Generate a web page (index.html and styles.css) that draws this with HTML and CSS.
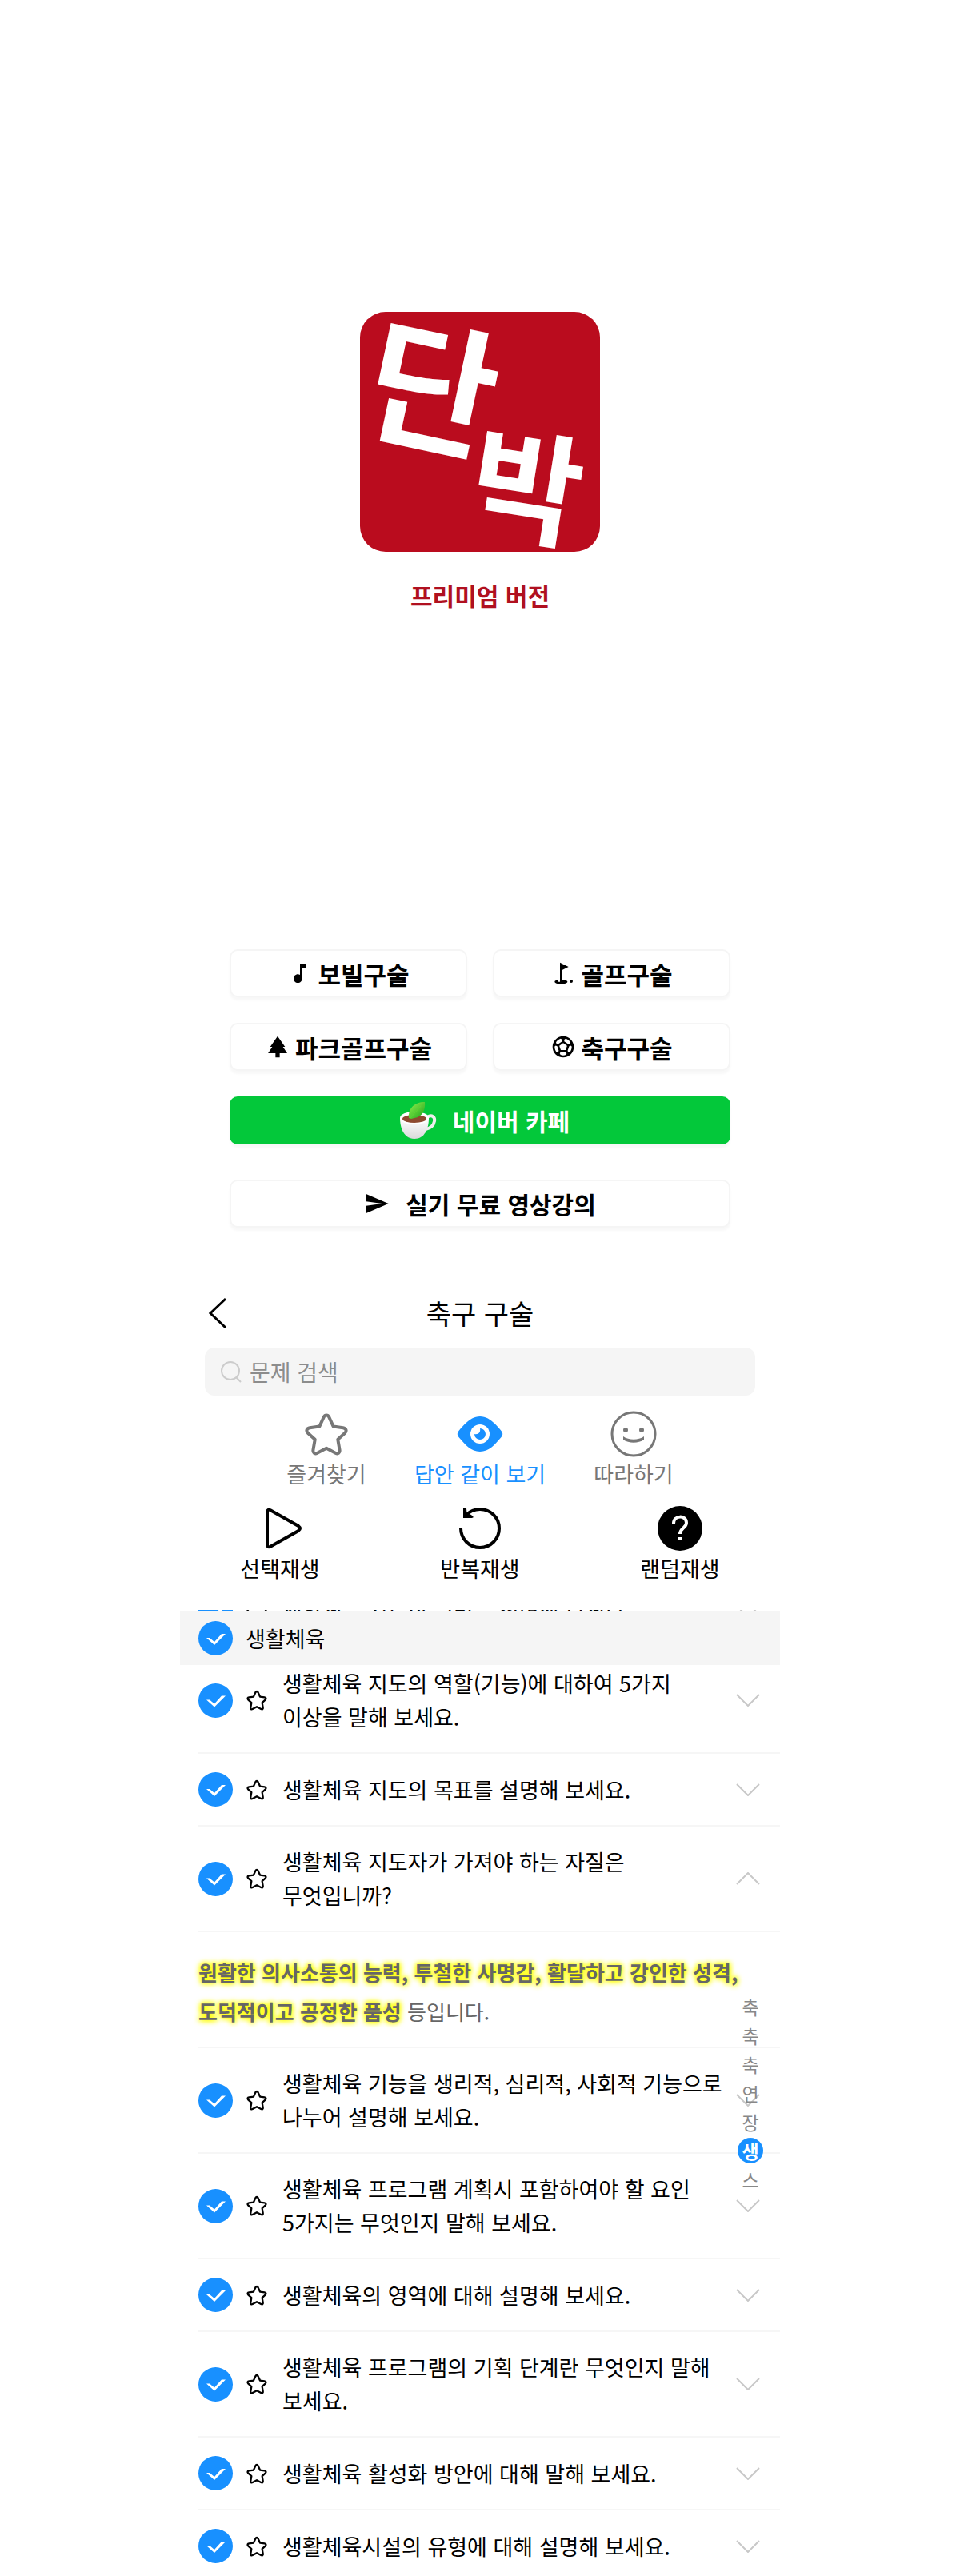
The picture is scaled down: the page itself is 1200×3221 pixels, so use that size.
FILE: index.html
```html
<!DOCTYPE html>
<html lang="ko">

<head>
  <meta charset="UTF-8">
  <meta name="viewport" content="width=device-width, initial-scale=1.0">
  <title>단박 - 축구 구술</title>
  <link rel="stylesheet" href="styles.css">
</head>

<body>
  <svg class="sprite" aria-hidden="true">
    <symbol id="icon-star" viewBox="0 0 60 60">
      <path d="M30 6.500C31.500 6.500 32.600 7.400 33.300 8.800L38.600 20.500L50.800 22.300C54.600 22.900 55.800 26 53.200 28.700L44.300 36.800L46.500 49.600C47.200 53.500 44.700 55.500 41.300 53.700L30 47.700L18.700 53.700C15.300 55.500 12.800 53.500 13.500 49.600L15.700 36.800L6.800 28.700C4.200 26 5.400 22.900 9.200 22.300L21.400 20.500L26.700 8.800C27.400 7.400 28.500 6.500 30 6.500Z" fill="none" stroke="currentColor" stroke-linejoin="round" />
    </symbol>
    <symbol id="icon-down" viewBox="0 0 30 16">
      <path d="M1 1L15 15L29 1" fill="none" stroke="currentColor" stroke-width="2" />
    </symbol>
    <symbol id="icon-up" viewBox="0 0 30 16">
      <path d="M1 15L15 1L29 15" fill="none" stroke="currentColor" stroke-width="2" />
    </symbol>
  </svg>

  <main class="app">
    <section class="hero">
      <svg class="logo" viewBox="0 0 300 300" role="img" aria-label="단박">
        <rect width="300" height="300" rx="32" fill="#ba0c1e" />
        <text class="logo-text logo-dan" x="90" y="161" transform="rotate(12 90 98)">단</text>
        <text class="logo-text logo-bak" x="208" y="276" transform="rotate(9 208 222)">박</text>
      </svg>
      <p class="version">프리미엄 버전</p>
    </section>

    <nav class="menu">
      <a class="menu-btn" href="#">
        <svg viewBox="0 0 24 24"><path d="M12 3v10.550c-.59-.34-1.270-.55-2-.55-2.210 0-4 1.790-4 4s1.790 4 4 4 4-1.790 4-4V7h4V3z" /></svg>
        보빌구술
      </a>
      <a class="menu-btn" href="#">
        <svg viewBox="0 0 24 24"><circle cx="19.500" cy="19.500" r="1.500" /><path d="M17 5.920 9 2v18H7v-1.730c-1.790.35-3 .99-3 1.730 0 1.100 2.690 2 6 2s6-.9 6-2c0-.99-2.160-1.810-5-1.970V8.980z" /></svg>
        골프구술
      </a>
      <a class="menu-btn" href="#">
        <svg viewBox="0 0 24 24"><path d="M17 12h2L12 2 5.050 12H7l-3.900 6h6.920v4h3.960v-4H21z" /></svg>
        파크골프구술
      </a>
      <a class="menu-btn" href="#list">
        <svg viewBox="0 0 24 24"><path d="M12 2C6.480 2 2 6.480 2 12s4.480 10 10 10 10-4.480 10-10S17.520 2 12 2zm1 3.300 1.350-.95c1.820.56 3.370 1.760 4.380 3.340l-.39 1.340-1.350.46L13 6.900zm-3.350-.95L11 5.300v1.600L7.010 9.490l-1.350-.46-.39-1.340c1.010-1.570 2.560-2.770 4.380-3.340M7.080 17.110l-1.140.1C4.730 15.810 4 13.990 4 12c0-.12.01-.23.02-.35l1-.73 1.380.48 1.460 4.340zm7.420 2.480c-.79.26-1.630.41-2.500.41s-1.710-.15-2.500-.41l-.69-1.490.64-1.100h5.110l.64 1.110zM14.270 15H9.730l-1.350-4.020L12 8.440l3.630 2.540zm3.790 2.210-1.140-.1-.79-1.370 1.460-4.340 1.390-.47 1 .73c.01.11.02.22.02.34 0 1.990-.73 3.810-1.940 5.210" /></svg>
        축구구술
      </a>
      <a class="menu-btn wide cafe" href="#">
        <svg class="cup" viewBox="0 0 58 48">
          <defs>
            <linearGradient id="cupFill" x1="0" y1="0" x2="0" y2="1">
              <stop offset="0" stop-color="#fff" />
              <stop offset="1" stop-color="#d9dadb" />
            </linearGradient>
            <linearGradient id="leafFill" x1="0" y1="0" x2="1" y2="1">
              <stop offset="0" stop-color="#8ff04e" />
              <stop offset="1" stop-color="#1fa51c" />
            </linearGradient>
          </defs>
          <path d="M46 20C52 16 56 20 55 25C54 31 49 34 44 35" fill="none" stroke="#eee" stroke-width="4" />
          <path d="M12 21C12 34 17 47 30 47C43 47 48 34 48 21Z" fill="url(#cupFill)" />
          <ellipse cx="30" cy="21" rx="18" ry="8" fill="#fff" />
          <ellipse cx="30" cy="22" rx="15" ry="5" fill="#8d4a2f" />
          <path d="M23 21C22 9 30 1 43 1C44 11 40 20 30 21L26 22Z" fill="url(#leafFill)" />
          <path d="M24 22L38 6" stroke="#5fd236" stroke-width="1" />
        </svg>
        네이버 카페
      </a>
      <a class="menu-btn wide lecture" href="#">
        <svg viewBox="0 0 24 24"><path d="M2.010 21 23 12 2.010 3 2 10l15 2-15 2z" /></svg>
        실기 무료 영상강의
      </a>
    </nav>

    <header class="topbar">
      <button class="back" type="button" aria-label="뒤로">
        <svg viewBox="0 0 24 40"><path d="M22 2L3 20L22 38" fill="none" stroke="currentColor" stroke-width="3" /></svg>
      </button>
      <h1>축구 구술</h1>
    </header>

    <form class="search" role="search">
      <svg viewBox="0 0 26 26" aria-hidden="true"><circle cx="12" cy="12" r="11" /><path d="M19 20L25 26" /></svg>
      <input type="search" placeholder="문제 검색" aria-label="문제 검색">
    </form>

    <div class="tabs">
      <button type="button">
        <svg class="thick"><use href="#icon-star" /></svg>
        즐겨찾기
      </button>
      <button type="button" class="on">
        <svg viewBox="0 0 60 60">
          <path d="M3.500 26C11 17 19 8 30 8S49 17 56.500 26Q60 30 56.500 34C49 43 41 52 30 52S11 43 3.500 34Q0 30 3.500 26Z" fill="currentColor" />
          <circle cx="30" cy="30" r="12" fill="#fff" />
          <path d="M30 23A7 7 0 1 1 23 30C28 31 31 28 30 23Z" fill="currentColor" />
        </svg>
        답안 같이 보기
      </button>
      <button type="button">
        <svg viewBox="0 0 60 60">
          <circle cx="30" cy="30" r="27" fill="none" stroke="currentColor" stroke-width="3" />
          <circle cx="20" cy="25" r="3" fill="currentColor" />
          <circle cx="40" cy="25" r="3" fill="currentColor" />
          <path d="M17 33C24 38 36 38 43 33V37C36 42 24 42 17 37Z" fill="currentColor" />
        </svg>
        따라하기
      </button>
    </div>

    <div class="tabs players">
      <button type="button">
        <svg viewBox="0 0 60 60"><path d="M14 10Q14 5 18.500 7.500L53 27Q57 30 53 33L18.500 52.500Q14 55 14 50Z" fill="none" stroke="currentColor" stroke-width="4" /></svg>
        선택재생
      </button>
      <button type="button">
        <svg viewBox="0 0 60 60">
          <path d="M6 30A24 24 0 1 0 30 6Q20 6 13 13" fill="none" stroke="currentColor" stroke-width="4" />
          <path d="M9 4L13 5L13.500 11L19 13L22 16L20 17L9 17Z" fill="currentColor" />
        </svg>
        반복재생
      </button>
      <button type="button">
        <svg viewBox="0 0 60 60">
          <circle cx="30" cy="30" r="28" fill="currentColor" />
          <path d="M22 24C22 13 38 13 38 23C38 30 30 29 30 37" fill="none" stroke="#fff" stroke-width="4" />
          <rect x="28" y="41" width="4" height="4" fill="#fff" />
        </svg>
        랜덤재생
      </button>
    </div>

    <section class="list" id="list">
      <div class="list-title">
        <input type="checkbox" id="all" checked>
        <label for="all">생활체육</label>
      </div>

      <ul>
        <li class="row">
          <input type="checkbox" id="q0" checked>
          <button class="star" type="button" aria-label="즐겨찾기"><svg><use href="#icon-star" /></svg></button>
          <label for="q0">생활체육 지도의 원리를 설명해 보세요.</label>
          <button class="arrow" type="button" aria-label="열기"><svg><use href="#icon-down" /></svg></button>
        </li>
        <li class="row">
          <input type="checkbox" id="q1" checked>
          <button class="star" type="button" aria-label="즐겨찾기"><svg><use href="#icon-star" /></svg></button>
          <label for="q1">생활체육 지도의 역할(기능)에 대하여 5가지 이상을 말해 보세요.</label>
          <button class="arrow" type="button" aria-label="열기"><svg><use href="#icon-down" /></svg></button>
        </li>
        <li class="row">
          <input type="checkbox" id="q2" checked>
          <button class="star" type="button" aria-label="즐겨찾기"><svg><use href="#icon-star" /></svg></button>
          <label for="q2">생활체육 지도의 목표를 설명해 보세요.</label>
          <button class="arrow" type="button" aria-label="열기"><svg><use href="#icon-down" /></svg></button>
        </li>
        <li class="row">
          <input type="checkbox" id="q3" checked>
          <button class="star" type="button" aria-label="즐겨찾기"><svg><use href="#icon-star" /></svg></button>
          <label for="q3">생활체육 지도자가 가져야 하는 자질은 무엇입니까?</label>
          <button class="arrow" type="button" aria-label="닫기"><svg><use href="#icon-up" /></svg></button>
        </li>
        <li class="answer">
          <strong>원활한 의사소통의 능력, 투철한 사명감, 활달하고 강인한 성격, 도덕적이고 공정한 품성</strong> 등입니다.
        </li>
        <li class="row">
          <input type="checkbox" id="q4" checked>
          <button class="star" type="button" aria-label="즐겨찾기"><svg><use href="#icon-star" /></svg></button>
          <label for="q4">생활체육 기능을 생리적, 심리적, 사회적 기능으로 나누어 설명해 보세요.</label>
          <button class="arrow" type="button" aria-label="열기"><svg><use href="#icon-down" /></svg></button>
        </li>
        <li class="row">
          <input type="checkbox" id="q5" checked>
          <button class="star" type="button" aria-label="즐겨찾기"><svg><use href="#icon-star" /></svg></button>
          <label for="q5">생활체육 프로그램 계획시 포함하여야 할 요인 5가지는 무엇인지 말해 보세요.</label>
          <button class="arrow" type="button" aria-label="열기"><svg><use href="#icon-down" /></svg></button>
        </li>
        <li class="row">
          <input type="checkbox" id="q6" checked>
          <button class="star" type="button" aria-label="즐겨찾기"><svg><use href="#icon-star" /></svg></button>
          <label for="q6">생활체육의 영역에 대해 설명해 보세요.</label>
          <button class="arrow" type="button" aria-label="열기"><svg><use href="#icon-down" /></svg></button>
        </li>
        <li class="row">
          <input type="checkbox" id="q7" checked>
          <button class="star" type="button" aria-label="즐겨찾기"><svg><use href="#icon-star" /></svg></button>
          <label for="q7">생활체육 프로그램의 기획 단계란 무엇인지 말해 보세요.</label>
          <button class="arrow" type="button" aria-label="열기"><svg><use href="#icon-down" /></svg></button>
        </li>
        <li class="row">
          <input type="checkbox" id="q8" checked>
          <button class="star" type="button" aria-label="즐겨찾기"><svg><use href="#icon-star" /></svg></button>
          <label for="q8">생활체육 활성화 방안에 대해 말해 보세요.</label>
          <button class="arrow" type="button" aria-label="열기"><svg><use href="#icon-down" /></svg></button>
        </li>
        <li class="row">
          <input type="checkbox" id="q9" checked>
          <button class="star" type="button" aria-label="즐겨찾기"><svg><use href="#icon-star" /></svg></button>
          <label for="q9">생활체육시설의 유형에 대해 설명해 보세요.</label>
          <button class="arrow" type="button" aria-label="열기"><svg><use href="#icon-down" /></svg></button>
        </li>
      </ul>

      <nav class="index" aria-label="분류">
        <a href="#list">축</a>
        <a href="#list">축</a>
        <a href="#list">축</a>
        <a href="#list">연</a>
        <a href="#list">장</a>
        <a href="#list" class="on">생</a>
        <a href="#list">스</a>
      </nav>
    </section>
  </main>
</body>

</html>
```

FILE: styles.css
```css
* {
  box-sizing: border-box;
}

body {
  margin: 0;
  background-color: #fff;
  color: #000;
  font-family: 'Noto Sans CJK KR', 'Noto Sans', sans-serif;
  font-size: 27px;
  word-break: keep-all;
}

button {
  padding: 0;
  border: none;
  background: none;
  color: inherit;
  font: inherit;
  cursor: pointer;
}

a {
  color: inherit;
  text-decoration: none;
}

svg {
  display: block;
}

.sprite {
  display: none;
}

.app {
  max-width: 750px;
  margin: 0 auto;
}

/* 로고 */
.hero {
  padding-top: 390px;
  text-align: center;
}

.logo {
  width: 300px;
  height: 300px;
  margin: 0 auto;
}

.logo-text {
  fill: #fff;
  font-weight: 700;
  text-anchor: middle;
}

.logo-dan {
  font-size: 176px;
}

.logo-bak {
  font-size: 152px;
}

.version {
  margin: 32px 0 0;
  color: #b01020;
  font-size: 30px;
  font-weight: 700;
  line-height: 44px;
}

/* 메뉴 버튼 */
.menu {
  display: grid;
  grid-template-columns: 1fr 1fr;
  gap: 32px;
  margin-top: 421px;
  padding: 0 62px;
}

.menu-btn {
  display: flex;
  align-items: center;
  justify-content: center;
  gap: 6px;
  height: 60px;
  border: 2px solid #f5f5f5;
  border-radius: 10px;
  background-color: #fff;
  box-shadow: 0 4px 3px rgba(0, 0, 0, 0.03);
  font-size: 31px;
  font-weight: 700;
}

.menu-btn svg {
  width: 32px;
  height: 32px;
}

.menu-btn.wide {
  grid-column: 1 / -1;
  gap: 20px;
  font-size: 30px;
}

.menu-btn.cafe {
  border: none;
  background-color: #03c83a;
  color: #fff;
}

.menu-btn .cup {
  width: 58px;
  height: 48px;
}

.menu-btn.lecture {
  margin-top: 12px;
}

/* 상단 */
.topbar {
  display: grid;
  grid-template-columns: 60px 1fr 60px;
  align-items: center;
  height: 86px;
  margin-top: 64px;
  padding: 0 31px;
}

.topbar h1 {
  margin: 0;
  font-size: 34px;
  font-weight: 400;
  line-height: 48px;
  text-align: center;
}

.back svg {
  width: 24px;
  height: 40px;
  margin-left: 4px;
}

.search {
  display: flex;
  align-items: center;
  gap: 10px;
  height: 60px;
  margin: 0 31px;
  padding: 0 20px;
  border-radius: 12px;
  background-color: #f5f5f5;
}

.search svg {
  width: 26px;
  height: 26px;
  overflow: visible;
  fill: none;
  stroke: #ccc;
  stroke-width: 2;
}

.search input {
  flex: 1;
  min-width: 0;
  padding: 0;
  border: none;
  outline: none;
  background: none;
  font: inherit;
  font-size: 28px;
}

.search input::placeholder {
  color: #8c8c8c;
}

.tabs {
  display: grid;
  grid-template-columns: repeat(3, 1fr);
  padding: 18px 87px 0;
  color: #777;
  line-height: 40px;
}

.tabs button {
  white-space: nowrap;
}

.tabs svg {
  width: 60px;
  height: 60px;
  margin: 0 auto;
}

.tabs .thick {
  stroke-width: 4;
}

.tabs .on {
  color: #1890ff;
}

.players {
  padding-right: 0;
  padding-left: 0;
  color: #000;
}

/* 문제 목록 */
.list {
  position: relative;
  margin-top: 32px;
  overflow: hidden;
}

.list ul {
  margin: -43px 0 0;
  padding: 0 0 0 23px;
  list-style: none;
}

.list-title {
  position: absolute;
  top: 2px;
  left: 0;
  right: 0;
  z-index: 1;
  display: flex;
  align-items: center;
  gap: 16px;
  height: 67px;
  padding-left: 23px;
  background-color: #f5f5f5;
}

input[type="checkbox"] {
  flex: none;
  width: 43px;
  height: 43px;
  margin: 0;
  border: 2px solid #ccc;
  border-radius: 50%;
  appearance: none;
}

input[type="checkbox"]:checked {
  border: none;
  background-color: #1890ff;
}

input[type="checkbox"]:checked::before {
  content: '';
  display: block;
  width: 43px;
  height: 43px;
  background-color: #fff;
  clip-path: polygon(10px 21px, 14px 21px, 20px 26px, 29px 16px, 34px 16px, 20px 30px);
}

.row {
  display: flex;
  align-items: center;
  padding: 23px 25px 23px 0;
  border-bottom: 2px solid #f6f6f6;
  line-height: 42px;
}

.row:last-child {
  padding-bottom: 18px;
  border-bottom: none;
}

.row label {
  flex: 1;
  margin: 0 8px 0 18px;
}

.star {
  margin-left: 16px;
}

.star svg {
  width: 28px;
  height: 28px;
  stroke-width: 5;
}

.arrow {
  color: #c8c8c8;
}

.arrow svg {
  width: 30px;
  height: 16px;
}

.answer {
  padding: 25px 20px 20px 0;
  border-bottom: 2px solid #f6f6f6;
  color: #666;
  font-size: 26px;
  line-height: 49px;
}

.answer strong {
  text-shadow: 0 0 6px #ff0, 0 0 6px #ff0, 0 0 8px #ff0;
}

.index {
  position: absolute;
  top: 480px;
  right: 21px;
  display: flex;
  flex-direction: column;
  gap: 4px;
  color: #888;
  font-size: 23px;
  line-height: 32px;
  text-align: center;
}

.index a {
  width: 32px;
  height: 32px;
  border-radius: 50%;
}

.index .on {
  background-color: #1890ff;
  color: #fff;
  font-weight: 700;
}
```
